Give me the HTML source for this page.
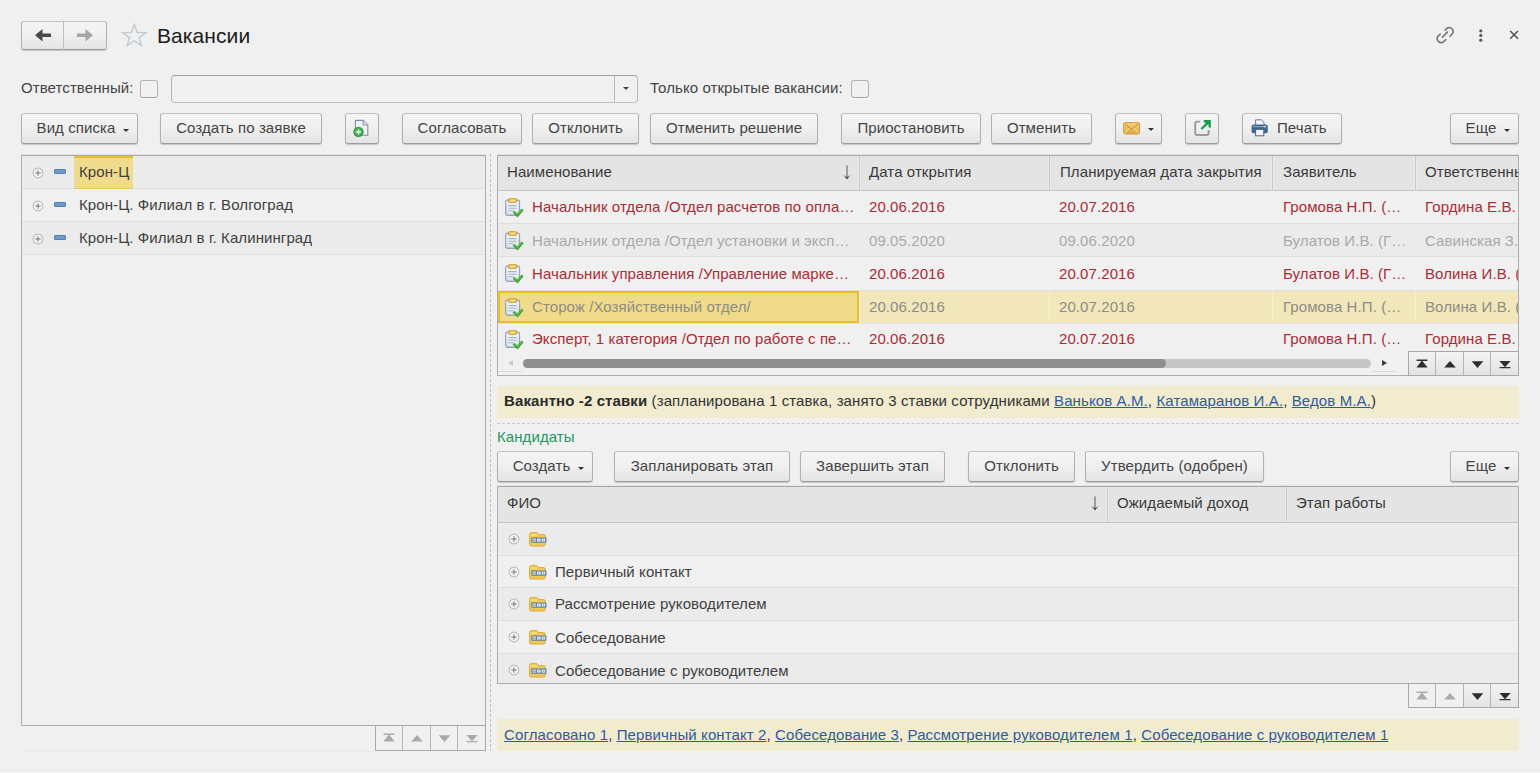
<!DOCTYPE html>
<html lang="ru"><head><meta charset="utf-8"><title>Вакансии</title>
<style>
*{box-sizing:border-box;margin:0;padding:0}
html,body{width:1540px;height:773px;overflow:hidden;background:#f0f0f0}
body{position:relative;font-family:"Liberation Sans",Arial,sans-serif;font-size:15px;letter-spacing:.085px;color:#3f3f3f}
.abs{position:absolute}
.btn{position:absolute;top:113px;height:31px;border:1px solid #b2b2b2;border-top-color:#c2c2c2;border-bottom-color:#9c9c9c;border-radius:3px;background:linear-gradient(#f4f4f4,#f0f0f0 45%,#e4e4e4);box-shadow:0 1px 1px rgba(0,0,0,.18);text-align:center;line-height:27px;white-space:nowrap;color:#444}
.btn.r2{top:451px}
.btn.dd{padding-left:7px}
.tri{display:inline-block;width:0;height:0;border-left:3.5px solid transparent;border-right:3.5px solid transparent;border-top:3.5px solid #333;vertical-align:middle;margin-left:8px;position:relative;top:1px}
.title{left:157px;top:21px;font-size:21px;line-height:30px;color:#1b1b1b}
.lbl{line-height:20px;color:#444}
.cb{width:18px;height:18px;border:1px solid #b4b4b4;border-bottom-color:#a0a0a0;border-radius:3px;background:#f1f1f1;box-shadow:0 1px 0 #f8f8f8}
.panel{border:1px solid #aeaeae;border-top-color:#a8a8a8;box-shadow:0 -1px 0 rgba(0,0,0,.05);background:#f0f0f0;overflow:hidden}
.row{position:absolute;left:0;right:0;height:33px;border-bottom:1px solid #dedede;line-height:32px;white-space:nowrap}
.row.alt{background:#ebebeb}
.hdr{position:absolute;left:0;right:0;top:0;height:35px;background:#e4e4e4;border-bottom:1px solid #c4c4c4;line-height:34px;color:#3a3a3a}
.hc{position:absolute;top:0;height:34px;border-left:1px solid #c8c8c8;padding-left:9px;overflow:hidden;white-space:nowrap;box-shadow:inset 1px 0 0 #ebebeb,-1px 0 0 #ebebeb;line-height:32px}
.h2{height:36px}.h2 .hc{height:35px;line-height:32px}
.c{position:absolute;top:0;height:32px;overflow:hidden;white-space:nowrap}
.red{color:#ab2c35}
.gray{color:#a9a9a9}
.row.selr{color:#8d8d86;background:#f2e6bb;border-bottom-color:#e6e0ea}
.selr .c{box-shadow:inset 1px 0 0 #f7f0d8}
.banner{background:#f1ebcf;line-height:31px;letter-spacing:.11px;padding-left:7px;white-space:nowrap;color:#333}
a{color:#2f5b9c;text-decoration:underline}
.nav{position:absolute;width:111px;height:25px;border:1px solid #a8a8a8;background:#f0f0f0}
.nav i{position:absolute;top:0;height:23px;border-left:1px solid #b4b4b4}
.nav i.on{background:linear-gradient(#f3f3f3,#e3e3e3)}
.sort{position:absolute;top:0;font-size:15px;color:#444}
</style></head><body>
<svg width="0" height="0" style="position:absolute"><defs><linearGradient id="cb" x1="0" y1="0" x2="0" y2="1"><stop offset="0" stop-color="#eef2f6"/><stop offset="1" stop-color="#c5d3e0"/></linearGradient><linearGradient id="ml" x1="0" y1="0" x2="0" y2="1"><stop offset="0" stop-color="#f3d27c"/><stop offset="1" stop-color="#dfa845"/></linearGradient></defs></svg>
<div class="abs" style="left:21px;top:21px;width:86px;height:29px;border:1px solid #b2b2b2;border-top-color:#c2c2c2;border-bottom-color:#9c9c9c;border-radius:3px;background:linear-gradient(#f4f4f4,#f0f0f0 45%,#e4e4e4);box-shadow:0 1px 1px rgba(0,0,0,.18)">
 <div class="abs" style="left:41px;top:0;width:1px;height:28px;background:#c0c0c0"></div>
 <svg class="abs" style="left:0;top:0" width="84" height="27" viewBox="0 0 84 27"><path d="M13 13.2 L20.5 7 L20.5 11.4 L29 11.4 L29 15 L20.5 15 L20.5 19.4 Z" fill="#4a4a4a"/><path d="M71 13.2 L63.5 7 L63.5 11.4 L55 11.4 L55 15 L63.5 15 L63.5 19.4 Z" fill="#a6a6a6"/></svg>
</div>
<svg class="abs" style="left:120px;top:21px" width="29" height="28" viewBox="0 0 29 28"><path d="M14.3 3.6 L17.2 11.4 L26 11.6 L19 16.7 L21.5 24.6 L14.3 19.9 L7.1 24.6 L9.6 16.7 L2.6 11.6 L11.4 11.4 Z" fill="none" stroke="#c3cad1" stroke-width="1.5" stroke-linejoin="miter"/></svg>
<div class="abs title">Вакансии</div>
<svg class="abs" style="left:1432px;top:24px" width="26" height="24" viewBox="0 0 26 24"><g fill="none" stroke="#707070" stroke-width="1.5" stroke-linecap="round"><path d="M8.3 10 L6.2 12.1 A3.9 3.9 0 0 0 11.7 17.6 L13.8 15.5"/><path d="M13 6.2 L14.6 4.6 A3.9 3.9 0 0 1 20.1 10.1 L18 12.2"/><path d="M10.3 13.2 L15.4 8.1"/></g></svg>
<svg class="abs" style="left:1476px;top:26px" width="10" height="18" viewBox="0 0 10 18"><g fill="#5a5a5a"><circle cx="4.8" cy="4.8" r="1.6"/><circle cx="4.8" cy="9.4" r="1.6"/><circle cx="4.8" cy="14.2" r="1.6"/></g></svg>
<svg class="abs" style="left:1508px;top:29px" width="12" height="12" viewBox="0 0 12 12"><path d="M2.2 2 L10 9.8 M10 2 L2.2 9.8" stroke="#4a4a4a" stroke-width="1.3" fill="none"/></svg>
<div class="abs lbl" style="left:21px;top:78px">Ответственный:</div>
<div class="abs cb" style="left:140px;top:80px"></div>
<div class="abs" style="left:171px;top:75px;width:467px;height:28px;border:1px solid #b6b6b6;border-top-color:#a2a2a2;border-bottom-color:#c2c2c2;border-radius:4px;background:#f0f0f0">
 <div class="abs" style="left:442px;top:0;width:1px;height:26px;background:#b8b8b8"></div>
 <div class="abs" style="left:451px;top:11px;width:0;height:0;border-left:3.5px solid transparent;border-right:3.5px solid transparent;border-top:3.5px solid #444"></div>
</div>
<div class="abs lbl" style="left:650px;top:78px">Только открытые вакансии:</div>
<div class="abs cb" style="left:851px;top:80px"></div>
<div class="btn dd" style="left:21px;width:117px">Вид списка<span class="tri"></span></div>
<div class="btn" style="left:160px;width:162px">Создать по заявке</div>
<div class="btn" style="left:345px;width:34px"><svg class="abs" style="left:6px;top:4px" width="22" height="22" viewBox="0 0 22 22"><path d="M3.4 2.4 H11.4 L15.8 6.8 V17.2 H3.4 Z" fill="#eff0f2" stroke="#8191a5" stroke-width="1.1" stroke-linejoin="round"/><path d="M11.2 2.6 V7 H15.6" fill="#e3e8ee" stroke="#8796a8" stroke-width="1.1" stroke-linejoin="round"/><circle cx="6.5" cy="13.9" r="5.2" fill="#2d9a3f"/><circle cx="6.5" cy="13.5" r="4.2" fill="#43ad4f"/><path d="M3.8 13.9H9.2M6.5 11.2V16.6" stroke="#e9f7e6" stroke-width="1.5"/></svg></div>
<div class="btn" style="left:402px;width:120px">Согласовать</div>
<div class="btn" style="left:532px;width:107px">Отклонить</div>
<div class="btn" style="left:650px;width:168px">Отменить решение</div>
<div class="btn" style="left:841px;width:140px">Приостановить</div>
<div class="btn" style="left:991px;width:101px">Отменить</div>
<div class="btn" style="left:1115px;width:47px"><svg class="abs" style="left:7px;top:8px" width="18" height="13" viewBox="0 0 18 13"><rect x="0.6" y="0.6" width="16" height="11.4" rx="1.6" fill="url(#ml)" stroke="#d19c3a" stroke-width="1"/><path d="M1.6 1.6 L8.6 7.2 L15.6 1.6" fill="none" stroke="#c58a2c" stroke-width="1"/><path d="M1.6 11 L6.6 6 M15.6 11 L10.6 6" fill="none" stroke="#f7e3a6" stroke-width="1"/></svg><div class="abs" style="left:32px;top:14px;width:0;height:0;border-left:3.5px solid transparent;border-right:3.5px solid transparent;border-top:3.5px solid #333"></div></div>
<div class="btn" style="left:1185px;width:34px"><svg class="abs" style="left:7px;top:5px" width="20" height="20" viewBox="0 0 20 20"><path d="M7.2 2.6 H4.2 Q2.2 2.6 2.2 4.6 V14 Q2.2 16 4.2 16 H13.6 Q15.6 16 15.6 14 V11" fill="none" stroke="#9a9a9a" stroke-width="1.9"/><path d="M8.4 10 L15 3.6" stroke="#169a4f" stroke-width="2.2" fill="none"/><path d="M10.6 1 H17.8 V8.4 L15.6 8.4 L15.4 5 L11 3.2 Z" fill="#169a4f"/></svg></div>
<div class="btn" style="left:1242px;width:100px;text-align:left;padding-left:34px"><svg class="abs" style="left:8px;top:5px" width="18" height="18" viewBox="0 0 18 18"><path d="M4.6 5.6 V0.8 H10.4 L13 3.4 V5.6" fill="#f4f5f7" stroke="#5b7da0" stroke-width="1"/><rect x="0.6" y="5.6" width="16.2" height="8.6" rx="2" fill="#41678f"/><rect x="2" y="7" width="13.4" height="1.2" fill="#7fa0c0"/><rect x="4.6" y="10.4" width="8.2" height="6.4" fill="#f4f5f7" stroke="#41678f" stroke-width="1"/><rect x="12.6" y="7.2" width="2.4" height="1" fill="#e8eef4"/></svg>Печать</div>
<div class="btn dd" style="left:1450px;width:69px">Еще<span class="tri"></span></div>
<div class="abs panel" style="left:21px;top:155px;width:465px;height:571px"><div class="row alt" style="top:0px"><svg class="abs" style="left:9px;top:10px" width="14" height="14" viewBox="0 0 14 14"><circle cx="7" cy="7" r="4.9" fill="#f3f3f3" stroke="#bdbdbd" stroke-width="1.1"/><path d="M4.3 7H9.7M7 4.3V9.7" stroke="#707070" stroke-width=".95"/></svg><div class="abs" style="left:32px;top:13px;width:12px;height:5px;background:#6f9cc6;border:1px solid #5382ad;border-radius:1px"></div><span class="c" style="left:52px;top:0;height:33px;padding-left:5px;padding-right:4px;background:#efdb8b;border-top:2px solid #e9bf22;border-bottom:1px solid #e6c95e;line-height:28px">Крон-Ц</span></div><div class="row" style="top:33px"><svg class="abs" style="left:9px;top:10px" width="14" height="14" viewBox="0 0 14 14"><circle cx="7" cy="7" r="4.9" fill="#f3f3f3" stroke="#bdbdbd" stroke-width="1.1"/><path d="M4.3 7H9.7M7 4.3V9.7" stroke="#707070" stroke-width=".95"/></svg><div class="abs" style="left:32px;top:13px;width:12px;height:5px;background:#6f9cc6;border:1px solid #5382ad;border-radius:1px"></div><span class="c" style="left:57px">Крон-Ц. Филиал в г. Волгоград</span></div><div class="row alt" style="top:66px"><svg class="abs" style="left:9px;top:10px" width="14" height="14" viewBox="0 0 14 14"><circle cx="7" cy="7" r="4.9" fill="#f3f3f3" stroke="#bdbdbd" stroke-width="1.1"/><path d="M4.3 7H9.7M7 4.3V9.7" stroke="#707070" stroke-width=".95"/></svg><div class="abs" style="left:32px;top:13px;width:12px;height:5px;background:#6f9cc6;border:1px solid #5382ad;border-radius:1px"></div><span class="c" style="left:57px">Крон-Ц. Филиал в г. Калининград</span></div></div><div class="nav" style="left:375px;top:725px;height:26px"><i class="" style="left:0px;width:26px;height:24px;border-left:0;"><svg width="26" height="24" viewBox="0 0 26 24" style="position:absolute;left:0;top:0"><path d="M7.6 7.6H18.4V8.9H7.6Z M13.0 8.6 L18.6 15.6 H7.4Z" fill="#a9a9a9"/></svg></i><i class="" style="left:26px;width:28px;height:24px;"><svg width="28" height="24" viewBox="0 0 28 24" style="position:absolute;left:0;top:0"><path d="M14.0 8.9 L19.8 15.6 H8.2Z" fill="#a9a9a9"/></svg></i><i class="" style="left:54px;width:27px;height:24px;"><svg width="27" height="24" viewBox="0 0 27 24" style="position:absolute;left:0;top:0"><path d="M13.5 15.9 L19.3 9.2 H7.7Z" fill="#a9a9a9"/></svg></i><i class="" style="left:81px;width:28px;height:24px;"><svg width="28" height="24" viewBox="0 0 28 24" style="position:absolute;left:0;top:0"><path d="M8.6 14.9H19.4V16.2H8.6Z M14.0 15.2 L19.6 9 H8.4Z" fill="#a9a9a9"/></svg></i></div><div class="abs panel" style="left:497px;top:155px;width:1022px;height:221px"><div class="hdr"><div class="hc" style="left:0px;width:361px;border-left:0;box-shadow:none;">Наименование</div><div class="hc" style="left:361px;width:190px;">Дата открытия</div><div class="hc" style="left:551px;width:223px;padding-left:10px;">Планируемая дата закрытия</div><div class="hc" style="left:774px;width:143px;padding-left:10px;">Заявитель</div><div class="hc" style="left:917px;width:105px;">Ответственный</div><svg class="abs" style="left:344px;top:9px" width="10" height="16" viewBox="0 0 10 16"><path d="M5 0.4V13.6M2.4 10.6L5 13.9L7.6 10.6" fill="none" stroke="#505050" stroke-width=".95"/><path d="M3.4 11.8H6.6L5 13.9Z" fill="#505050"/></svg></div><div class="row red" style="top:35px;height:33px"><svg class="abs" style="left:7px;top:7px" width="20" height="20" viewBox="0 0 20 20"><rect x="0.6" y="2.1" width="14" height="15.3" rx="1.8" fill="url(#cb)" stroke="#93a2b5" stroke-width="1.1"/><rect x="2.6" y="4.6" width="10" height="11" fill="#f3f6f9" opacity=".7"/><path d="M3.4 7.6H11.6M3.4 10.2H11.6M3.4 12.8H8.5" stroke="#9fb0c2" stroke-width="1.1"/><rect x="3.3" y="0.4" width="8.6" height="4.2" rx="1.6" fill="#e4bd55" stroke="#c99a3a" stroke-width=".8"/><rect x="5.2" y="1.8" width="4.8" height="1.5" rx=".6" fill="#f8e98e"/><path d="M8.6 13.6 L12.4 17.4 L17.6 11.4" fill="none" stroke="#3ea433" stroke-width="2.7" stroke-linejoin="miter"/><path d="M8.9 13.3 L12.4 16.6 L17.2 11.2" fill="none" stroke="#6cc657" stroke-width="1" /></svg><span class="c" style="left:34px;width:326px;box-shadow:none;">Начальник отдела /Отдел расчетов по опла…</span><span class="c" style="left:361px;width:190px;padding-left:10px">20.06.2016</span><span class="c" style="left:551px;width:223px;padding-left:10px">20.07.2016</span><span class="c" style="left:774px;width:143px;padding-left:11px">Громова Н.П. (…</span><span class="c" style="left:917px;width:105px;padding-left:10px">Гордина Е.В. (Г…</span></div><div class="row gray alt" style="top:68px;height:33px;line-height:34px"><svg class="abs" style="left:7px;top:7px" width="20" height="20" viewBox="0 0 20 20"><rect x="0.6" y="2.1" width="14" height="15.3" rx="1.8" fill="url(#cb)" stroke="#93a2b5" stroke-width="1.1"/><rect x="2.6" y="4.6" width="10" height="11" fill="#f3f6f9" opacity=".7"/><path d="M3.4 7.6H11.6M3.4 10.2H11.6M3.4 12.8H8.5" stroke="#9fb0c2" stroke-width="1.1"/><rect x="3.3" y="0.4" width="8.6" height="4.2" rx="1.6" fill="#e4bd55" stroke="#c99a3a" stroke-width=".8"/><rect x="5.2" y="1.8" width="4.8" height="1.5" rx=".6" fill="#f8e98e"/><path d="M8.6 13.6 L12.4 17.4 L17.6 11.4" fill="none" stroke="#3ea433" stroke-width="2.7" stroke-linejoin="miter"/><path d="M8.9 13.3 L12.4 16.6 L17.2 11.2" fill="none" stroke="#6cc657" stroke-width="1" /></svg><span class="c" style="left:34px;width:326px;box-shadow:none;">Начальник отдела /Отдел установки и эксп…</span><span class="c" style="left:361px;width:190px;padding-left:10px">09.05.2020</span><span class="c" style="left:551px;width:223px;padding-left:10px">09.06.2020</span><span class="c" style="left:774px;width:143px;padding-left:11px">Булатов И.В. (Г…</span><span class="c" style="left:917px;width:105px;padding-left:10px">Савинская З.А. (…</span></div><div class="row red" style="top:101px;height:34px;line-height:34px"><svg class="abs" style="left:7px;top:7px" width="20" height="20" viewBox="0 0 20 20"><rect x="0.6" y="2.1" width="14" height="15.3" rx="1.8" fill="url(#cb)" stroke="#93a2b5" stroke-width="1.1"/><rect x="2.6" y="4.6" width="10" height="11" fill="#f3f6f9" opacity=".7"/><path d="M3.4 7.6H11.6M3.4 10.2H11.6M3.4 12.8H8.5" stroke="#9fb0c2" stroke-width="1.1"/><rect x="3.3" y="0.4" width="8.6" height="4.2" rx="1.6" fill="#e4bd55" stroke="#c99a3a" stroke-width=".8"/><rect x="5.2" y="1.8" width="4.8" height="1.5" rx=".6" fill="#f8e98e"/><path d="M8.6 13.6 L12.4 17.4 L17.6 11.4" fill="none" stroke="#3ea433" stroke-width="2.7" stroke-linejoin="miter"/><path d="M8.9 13.3 L12.4 16.6 L17.2 11.2" fill="none" stroke="#6cc657" stroke-width="1" /></svg><span class="c" style="left:34px;width:326px;box-shadow:none;">Начальник управления /Управление марке…</span><span class="c" style="left:361px;width:190px;padding-left:10px">20.06.2016</span><span class="c" style="left:551px;width:223px;padding-left:10px">20.07.2016</span><span class="c" style="left:774px;width:143px;padding-left:11px">Булатов И.В. (Г…</span><span class="c" style="left:917px;width:105px;padding-left:10px">Волина И.В. (Н…</span></div><div class="row selr alt" style="top:135px;height:33px"><div class="abs" style="left:0;top:0;width:361px;height:32px;background:#efdb89;border:2px solid #e8be26"></div><svg class="abs" style="left:7px;top:7px" width="20" height="20" viewBox="0 0 20 20"><rect x="0.6" y="2.1" width="14" height="15.3" rx="1.8" fill="url(#cb)" stroke="#93a2b5" stroke-width="1.1"/><rect x="2.6" y="4.6" width="10" height="11" fill="#f3f6f9" opacity=".7"/><path d="M3.4 7.6H11.6M3.4 10.2H11.6M3.4 12.8H8.5" stroke="#9fb0c2" stroke-width="1.1"/><rect x="3.3" y="0.4" width="8.6" height="4.2" rx="1.6" fill="#e4bd55" stroke="#c99a3a" stroke-width=".8"/><rect x="5.2" y="1.8" width="4.8" height="1.5" rx=".6" fill="#f8e98e"/><path d="M8.6 13.6 L12.4 17.4 L17.6 11.4" fill="none" stroke="#3ea433" stroke-width="2.7" stroke-linejoin="miter"/><path d="M8.9 13.3 L12.4 16.6 L17.2 11.2" fill="none" stroke="#6cc657" stroke-width="1" /></svg><span class="c" style="left:34px;width:326px;box-shadow:none;">Сторож /Хозяйственный отдел/</span><span class="c" style="left:361px;width:190px;padding-left:10px">20.06.2016</span><span class="c" style="left:551px;width:223px;padding-left:10px">20.07.2016</span><span class="c" style="left:774px;width:143px;padding-left:11px">Громова Н.П. (…</span><span class="c" style="left:917px;width:105px;padding-left:10px">Волина И.В. (Н…</span></div><div class="row red" style="top:167px;height:34px;border-bottom:0"><svg class="abs" style="left:7px;top:7px" width="20" height="20" viewBox="0 0 20 20"><rect x="0.6" y="2.1" width="14" height="15.3" rx="1.8" fill="url(#cb)" stroke="#93a2b5" stroke-width="1.1"/><rect x="2.6" y="4.6" width="10" height="11" fill="#f3f6f9" opacity=".7"/><path d="M3.4 7.6H11.6M3.4 10.2H11.6M3.4 12.8H8.5" stroke="#9fb0c2" stroke-width="1.1"/><rect x="3.3" y="0.4" width="8.6" height="4.2" rx="1.6" fill="#e4bd55" stroke="#c99a3a" stroke-width=".8"/><rect x="5.2" y="1.8" width="4.8" height="1.5" rx=".6" fill="#f8e98e"/><path d="M8.6 13.6 L12.4 17.4 L17.6 11.4" fill="none" stroke="#3ea433" stroke-width="2.7" stroke-linejoin="miter"/><path d="M8.9 13.3 L12.4 16.6 L17.2 11.2" fill="none" stroke="#6cc657" stroke-width="1" /></svg><span class="c" style="left:34px;width:326px;box-shadow:none;">Эксперт, 1 категория /Отдел по работе с пе…</span><span class="c" style="left:361px;width:190px;padding-left:10px">20.06.2016</span><span class="c" style="left:551px;width:223px;padding-left:10px">20.07.2016</span><span class="c" style="left:774px;width:143px;padding-left:11px">Громова Н.П. (…</span><span class="c" style="left:917px;width:105px;padding-left:10px">Гордина Е.В. (Г…</span></div><div class="abs" style="left:25px;top:203px;width:848px;height:9px;border-radius:5px;background:#c6c6c6"></div>
<div class="abs" style="left:25px;top:203px;width:643px;height:9px;border-radius:5px;background:#8f8f8f"></div>
<div class="abs" style="left:10px;top:204px;width:0;height:0;border-top:3.5px solid transparent;border-bottom:3.5px solid transparent;border-right:5px solid #c9c9c9"></div>
<div class="abs" style="left:884px;top:204px;width:0;height:0;border-top:3.5px solid transparent;border-bottom:3.5px solid transparent;border-left:5px solid #3c3c3c"></div>
<div class="abs" style="left:0;top:215px;width:25px;height:1px;background:#d9d9d9"></div>
<div class="abs" style="left:874px;top:215px;width:24px;height:1px;background:#d9d9d9"></div>
</div><div class="nav" style="left:1408px;top:351px;height:25px"><i class="on" style="left:0px;width:26px;height:23px;border-left:0;"><svg width="26" height="24" viewBox="0 0 26 24" style="position:absolute;left:0;top:0"><path d="M7.6 7.6H18.4V8.9H7.6Z M13.0 8.6 L18.6 15.6 H7.4Z" fill="#2e2e2e"/></svg></i><i class="on" style="left:26px;width:28px;height:23px;"><svg width="28" height="24" viewBox="0 0 28 24" style="position:absolute;left:0;top:0"><path d="M14.0 8.9 L19.8 15.6 H8.2Z" fill="#2e2e2e"/></svg></i><i class="on" style="left:54px;width:27px;height:23px;"><svg width="27" height="24" viewBox="0 0 27 24" style="position:absolute;left:0;top:0"><path d="M13.5 15.9 L19.3 9.2 H7.7Z" fill="#2e2e2e"/></svg></i><i class="on" style="left:81px;width:28px;height:23px;"><svg width="28" height="24" viewBox="0 0 28 24" style="position:absolute;left:0;top:0"><path d="M8.6 14.9H19.4V16.2H8.6Z M14.0 15.2 L19.6 9 H8.4Z" fill="#2e2e2e"/></svg></i></div><div class="abs banner" style="left:497px;top:386px;width:1022px;height:32px;line-height:30px"><b style="color:#2b2b2b">Вакантно -2 ставки</b> (запланирована 1 ставка, занято 3 ставки сотрудниками <a>Ваньков А.М.</a>, <a>Катамаранов И.А.</a>, <a>Ведов М.А.</a>)</div>
<div class="abs" style="left:497px;top:423px;width:1022px;height:0;border-top:1px dashed #c8c8c8"></div>
<div class="abs" style="left:497px;top:427px;line-height:20px;color:#1f9764">Кандидаты</div>
<div class="abs" style="left:490px;top:154px;width:1px;height:597px;background:repeating-linear-gradient(#c2c2c2 0 3px,transparent 3px 5px)"></div>
<div class="btn r2 dd" style="left:497px;width:96px">Создать<span class="tri"></span></div>
<div class="btn r2" style="left:614px;width:176px">Запланировать этап</div>
<div class="btn r2" style="left:800px;width:145px">Завершить этап</div>
<div class="btn r2" style="left:968px;width:107px">Отклонить</div>
<div class="btn r2" style="left:1085px;width:179px">Утвердить (одобрен)</div>
<div class="btn r2 dd" style="left:1450px;width:69px">Еще<span class="tri"></span></div>
<div class="abs panel" style="left:497px;top:486px;width:1022px;height:198px"><div class="hdr h2"><div class="hc" style="left:0px;width:609px;border-left:0;box-shadow:none;">ФИО</div><div class="hc" style="left:609px;width:179px;">Ожидаемый доход</div><div class="hc" style="left:788px;width:234px;">Этап работы</div><svg class="abs" style="left:592px;top:9px" width="10" height="16" viewBox="0 0 10 16"><path d="M5 0.4V13.6M2.4 10.6L5 13.9L7.6 10.6" fill="none" stroke="#505050" stroke-width=".95"/><path d="M3.4 11.8H6.6L5 13.9Z" fill="#505050"/></svg></div><div class="row alt" style="top:36px;height:33px"><svg class="abs" style="left:9px;top:9px" width="14" height="14" viewBox="0 0 14 14"><circle cx="7" cy="7" r="4.9" fill="#f3f3f3" stroke="#bdbdbd" stroke-width="1.1"/><path d="M4.3 7H9.7M7 4.3V9.7" stroke="#707070" stroke-width=".95"/></svg><svg class="abs" style="left:31px;top:9px" width="18" height="15" viewBox="0 0 18 15"><path d="M0.6 2.4 Q0.6 0.6 2.4 0.6 H7 Q8.2 0.6 8.8 1.6 L9.6 2.6 H14.6 Q16.2 2.6 16.2 4.2 V12.4 Q16.2 14 14.6 14 H2.2 Q0.6 14 0.6 12.4 Z" fill="#f0c955" stroke="#d8a840" stroke-width="1"/><path d="M1.6 3 H8" stroke="#f9e27a" stroke-width="1.4"/><rect x="2.3" y="5.4" width="15.2" height="5.4" rx="1" fill="#5d7f9c"/><rect x="3.4" y="6.6" width="3.6" height="3" fill="#dfe7ee"/><path d="M3.4 8.2H7" stroke="#5d7f9c" stroke-width=".8"/><rect x="8" y="6.6" width="3.6" height="3" fill="#eef2f6"/><rect x="12.6" y="6.6" width="3.6" height="3" fill="#eef2f6"/><rect x="9.2" y="7.6" width="1.2" height="1" fill="#5d7f9c"/><rect x="13.4" y="7.7" width="2" height=".9" fill="#5d7f9c"/></svg><span class="c" style="left:57px;line-height:32px"></span></div><div class="row" style="top:69px;height:32px"><svg class="abs" style="left:9px;top:9px" width="14" height="14" viewBox="0 0 14 14"><circle cx="7" cy="7" r="4.9" fill="#f3f3f3" stroke="#bdbdbd" stroke-width="1.1"/><path d="M4.3 7H9.7M7 4.3V9.7" stroke="#707070" stroke-width=".95"/></svg><svg class="abs" style="left:31px;top:9px" width="18" height="15" viewBox="0 0 18 15"><path d="M0.6 2.4 Q0.6 0.6 2.4 0.6 H7 Q8.2 0.6 8.8 1.6 L9.6 2.6 H14.6 Q16.2 2.6 16.2 4.2 V12.4 Q16.2 14 14.6 14 H2.2 Q0.6 14 0.6 12.4 Z" fill="#f0c955" stroke="#d8a840" stroke-width="1"/><path d="M1.6 3 H8" stroke="#f9e27a" stroke-width="1.4"/><rect x="2.3" y="5.4" width="15.2" height="5.4" rx="1" fill="#5d7f9c"/><rect x="3.4" y="6.6" width="3.6" height="3" fill="#dfe7ee"/><path d="M3.4 8.2H7" stroke="#5d7f9c" stroke-width=".8"/><rect x="8" y="6.6" width="3.6" height="3" fill="#eef2f6"/><rect x="12.6" y="6.6" width="3.6" height="3" fill="#eef2f6"/><rect x="9.2" y="7.6" width="1.2" height="1" fill="#5d7f9c"/><rect x="13.4" y="7.7" width="2" height=".9" fill="#5d7f9c"/></svg><span class="c" style="left:57px;line-height:31px">Первичный контакт</span></div><div class="row alt" style="top:101px;height:33px"><svg class="abs" style="left:9px;top:9px" width="14" height="14" viewBox="0 0 14 14"><circle cx="7" cy="7" r="4.9" fill="#f3f3f3" stroke="#bdbdbd" stroke-width="1.1"/><path d="M4.3 7H9.7M7 4.3V9.7" stroke="#707070" stroke-width=".95"/></svg><svg class="abs" style="left:31px;top:9px" width="18" height="15" viewBox="0 0 18 15"><path d="M0.6 2.4 Q0.6 0.6 2.4 0.6 H7 Q8.2 0.6 8.8 1.6 L9.6 2.6 H14.6 Q16.2 2.6 16.2 4.2 V12.4 Q16.2 14 14.6 14 H2.2 Q0.6 14 0.6 12.4 Z" fill="#f0c955" stroke="#d8a840" stroke-width="1"/><path d="M1.6 3 H8" stroke="#f9e27a" stroke-width="1.4"/><rect x="2.3" y="5.4" width="15.2" height="5.4" rx="1" fill="#5d7f9c"/><rect x="3.4" y="6.6" width="3.6" height="3" fill="#dfe7ee"/><path d="M3.4 8.2H7" stroke="#5d7f9c" stroke-width=".8"/><rect x="8" y="6.6" width="3.6" height="3" fill="#eef2f6"/><rect x="12.6" y="6.6" width="3.6" height="3" fill="#eef2f6"/><rect x="9.2" y="7.6" width="1.2" height="1" fill="#5d7f9c"/><rect x="13.4" y="7.7" width="2" height=".9" fill="#5d7f9c"/></svg><span class="c" style="left:57px;line-height:32px">Рассмотрение руководителем</span></div><div class="row" style="top:134px;height:33px"><svg class="abs" style="left:9px;top:9px" width="14" height="14" viewBox="0 0 14 14"><circle cx="7" cy="7" r="4.9" fill="#f3f3f3" stroke="#bdbdbd" stroke-width="1.1"/><path d="M4.3 7H9.7M7 4.3V9.7" stroke="#707070" stroke-width=".95"/></svg><svg class="abs" style="left:31px;top:9px" width="18" height="15" viewBox="0 0 18 15"><path d="M0.6 2.4 Q0.6 0.6 2.4 0.6 H7 Q8.2 0.6 8.8 1.6 L9.6 2.6 H14.6 Q16.2 2.6 16.2 4.2 V12.4 Q16.2 14 14.6 14 H2.2 Q0.6 14 0.6 12.4 Z" fill="#f0c955" stroke="#d8a840" stroke-width="1"/><path d="M1.6 3 H8" stroke="#f9e27a" stroke-width="1.4"/><rect x="2.3" y="5.4" width="15.2" height="5.4" rx="1" fill="#5d7f9c"/><rect x="3.4" y="6.6" width="3.6" height="3" fill="#dfe7ee"/><path d="M3.4 8.2H7" stroke="#5d7f9c" stroke-width=".8"/><rect x="8" y="6.6" width="3.6" height="3" fill="#eef2f6"/><rect x="12.6" y="6.6" width="3.6" height="3" fill="#eef2f6"/><rect x="9.2" y="7.6" width="1.2" height="1" fill="#5d7f9c"/><rect x="13.4" y="7.7" width="2" height=".9" fill="#5d7f9c"/></svg><span class="c" style="left:57px;line-height:33px">Собеседование</span></div><div class="row alt" style="top:167px;height:33px"><svg class="abs" style="left:9px;top:9px" width="14" height="14" viewBox="0 0 14 14"><circle cx="7" cy="7" r="4.9" fill="#f3f3f3" stroke="#bdbdbd" stroke-width="1.1"/><path d="M4.3 7H9.7M7 4.3V9.7" stroke="#707070" stroke-width=".95"/></svg><svg class="abs" style="left:31px;top:9px" width="18" height="15" viewBox="0 0 18 15"><path d="M0.6 2.4 Q0.6 0.6 2.4 0.6 H7 Q8.2 0.6 8.8 1.6 L9.6 2.6 H14.6 Q16.2 2.6 16.2 4.2 V12.4 Q16.2 14 14.6 14 H2.2 Q0.6 14 0.6 12.4 Z" fill="#f0c955" stroke="#d8a840" stroke-width="1"/><path d="M1.6 3 H8" stroke="#f9e27a" stroke-width="1.4"/><rect x="2.3" y="5.4" width="15.2" height="5.4" rx="1" fill="#5d7f9c"/><rect x="3.4" y="6.6" width="3.6" height="3" fill="#dfe7ee"/><path d="M3.4 8.2H7" stroke="#5d7f9c" stroke-width=".8"/><rect x="8" y="6.6" width="3.6" height="3" fill="#eef2f6"/><rect x="12.6" y="6.6" width="3.6" height="3" fill="#eef2f6"/><rect x="9.2" y="7.6" width="1.2" height="1" fill="#5d7f9c"/><rect x="13.4" y="7.7" width="2" height=".9" fill="#5d7f9c"/></svg><span class="c" style="left:57px;line-height:34px">Собеседование с руководителем</span></div></div><div class="nav" style="left:1408px;top:683px;height:25px"><i class="" style="left:0px;width:26px;height:23px;border-left:0;"><svg width="26" height="24" viewBox="0 0 26 24" style="position:absolute;left:0;top:0"><path d="M7.6 7.6H18.4V8.9H7.6Z M13.0 8.6 L18.6 15.6 H7.4Z" fill="#a9a9a9"/></svg></i><i class="" style="left:26px;width:28px;height:23px;"><svg width="28" height="24" viewBox="0 0 28 24" style="position:absolute;left:0;top:0"><path d="M14.0 8.9 L19.8 15.6 H8.2Z" fill="#a9a9a9"/></svg></i><i class="on" style="left:54px;width:27px;height:23px;"><svg width="27" height="24" viewBox="0 0 27 24" style="position:absolute;left:0;top:0"><path d="M13.5 15.9 L19.3 9.2 H7.7Z" fill="#2e2e2e"/></svg></i><i class="on" style="left:81px;width:28px;height:23px;"><svg width="28" height="24" viewBox="0 0 28 24" style="position:absolute;left:0;top:0"><path d="M8.6 14.9H19.4V16.2H8.6Z M14.0 15.2 L19.6 9 H8.4Z" fill="#2e2e2e"/></svg></i></div><div class="abs banner" style="left:497px;top:719px;width:1022px;height:32px"><a>Согласовано 1</a>, <a>Первичный контакт 2</a>, <a>Собеседование 3</a>, <a>Рассмотрение руководителем 1</a>, <a>Собеседование с руководителем 1</a></div>
<div class="abs" style="left:21px;top:751px;width:354px;height:1px;background:#ebebeb"></div><div class="abs" style="left:0;top:772px;width:1540px;height:1px;background:#f6f6f6"></div>
</body></html>
